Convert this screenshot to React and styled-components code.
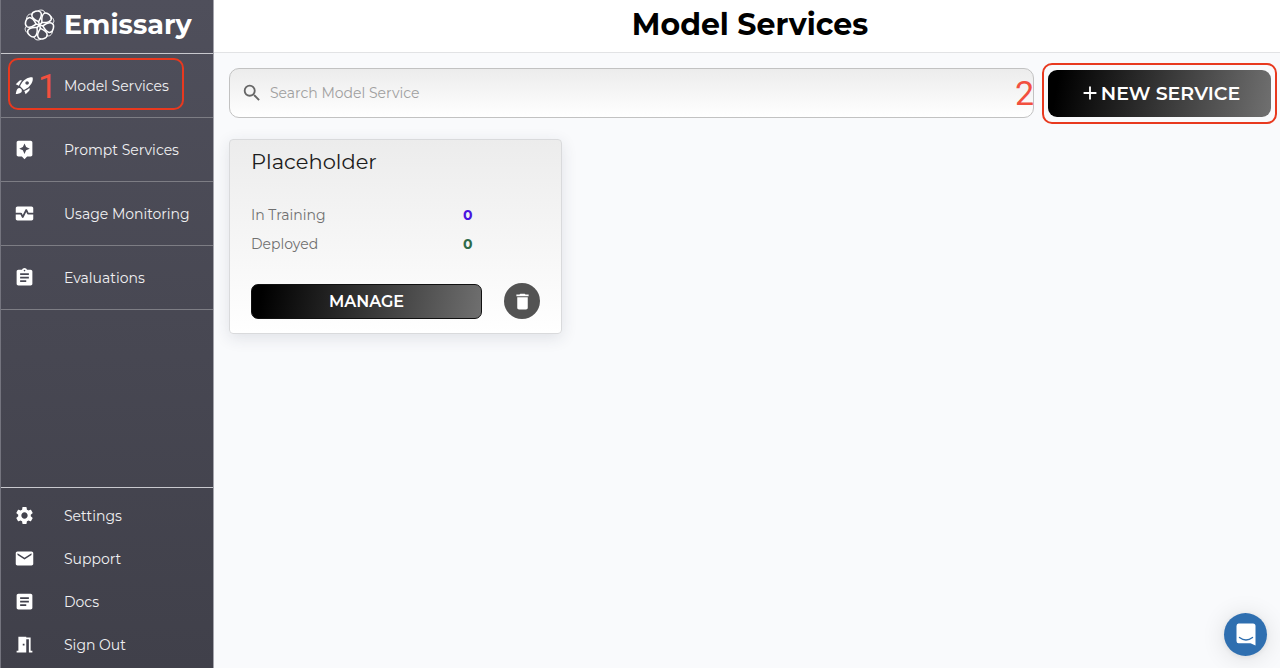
import React from 'react';
import styled, { createGlobalStyle } from 'styled-components';
import {
  MdAssistant, MdMonitorHeart, MdAssignment, MdSettings, MdEmail,
  MdArticle, MdMeetingRoom, MdSearch, MdDelete, MdAdd, MdRocketLaunch,
} from 'react-icons/md';

const GlobalStyle = createGlobalStyle`
  *, *::before, *::after { box-sizing: border-box; }
  body {
    margin: 0;
    background: #f9fafc;
    color: #111;
    font-family: Montserrat, Inter, "Liberation Sans", sans-serif;
  }
  button, input { font-family: inherit; }
`;

const Shell = styled.div`
  display: flex;
  min-height: 100vh;
`;

const Sidebar = styled.aside`
  position: sticky;
  top: 0;
  flex: 0 0 214px;
  height: 100vh;
  display: flex;
  flex-direction: column;
  color: #fff;
  background: linear-gradient(180deg, #4f4f5b 0%, #40404a 100%);
  border-left: 1px solid #74747e;
  border-right: 1px solid #a4a4ac;
`;

const Brand = styled.div`
  display: flex;
  align-items: center;
  gap: 8px;
  flex: 0 0 54px;
  padding: 0 0 4px 22px;
  border-bottom: 1px solid #c9c9ce;
  font-size: 27px;
  font-weight: 700;
`;

const List = styled.ul`
  list-style: none;
  margin: 0;
  padding: 0;
`;

const FooterList = styled(List)`
  margin-top: auto;
  padding: 6px 0 2px;
  border-top: 1px solid #c9c9ce;
`;

const NavItem = styled.li`
  position: relative;
  border-bottom: ${({ $compact }) => ($compact ? 'none' : '1px solid #7d7d84')};
`;

const NavLink = styled.a`
  display: flex;
  align-items: center;
  gap: 29px;
  height: ${({ $compact }) => ($compact ? '43px' : '63px')};
  padding-left: 13px;
  color: #f0f0f2;
  font-size: 14px;
  font-weight: 400;
  text-decoration: none;
  white-space: nowrap;

  svg { flex: none; color: #fff; }
`;

const Outline = styled.span`
  position: absolute;
  inset: ${({ $inset }) => $inset};
  border: 2px solid #e8391f;
  border-radius: 10px;
  pointer-events: none;
`;

const StepNumber = styled.span`
  position: absolute;
  top: 50%;
  ${({ $side }) => $side};
  transform: translateY(-50%);
  color: #f2503f;
  font-family: Roboto, "Liberation Sans", sans-serif;
  font-size: 34px;
  line-height: 36px;
  pointer-events: none;
`;

const Main = styled.main`
  flex: 1;
  min-width: 0;
`;

const Header = styled.header`
  display: flex;
  align-items: center;
  justify-content: center;
  height: 53px;
  padding: 0 0 2px 6px;
  background: #fff;
  border-bottom: 1px solid #e2e3e5;
`;

const Title = styled.h1`
  margin: 0;
  color: #000;
  font-size: 30px;
  line-height: 40px;
  font-weight: 700;
`;

const Content = styled.div`
  padding: 15px 9px 24px 15px;
`;

const Toolbar = styled.div`
  display: flex;
  align-items: center;
  gap: 14px;
  margin-bottom: 21px;
`;

const SearchWrap = styled.div`
  position: relative;
  flex: 1;
`;

const SearchBox = styled.label`
  display: flex;
  align-items: center;
  gap: 7px;
  height: 50px;
  padding: 0 12px 0 11px;
  border: 1px solid #c2c2c2;
  border-radius: 10px;
  background: linear-gradient(180deg, #ececec, #fff);
  color: #666;
`;

const SearchInput = styled.input`
  flex: 1;
  min-width: 0;
  padding: 0;
  border: 0;
  outline: 0;
  background: none;
  color: #333;
  font-size: 14px;
  font-weight: 400;

  &::placeholder { color: #a0a0a0; opacity: 1; }
`;

const ButtonWrap = styled.div`
  position: relative;
  flex: 0 0 223px;
`;

const GradientButton = styled.button`
  display: flex;
  align-items: center;
  justify-content: center;
  width: 100%;
  height: ${({ $large }) => ($large ? '47px' : '35px')};
  padding: 0;
  border: 1px solid ${({ $large }) => ($large ? 'transparent' : '#111')};
  border-radius: ${({ $large }) => ($large ? '9px' : '7px')};
  background: linear-gradient(100deg, #000 5%, #707070 100%) border-box;
  color: #fff;
  font-size: ${({ $large }) => ($large ? '19px' : '16px')};
  font-weight: 600;
  cursor: pointer;
`;

const Cards = styled.div`
  display: grid;
  grid-template-columns: repeat(auto-fill, 333px);
  gap: 20px;
`;

const Card = styled.article`
  padding: 7px 21px 14px;
  border: 1px solid #d9dadc;
  border-radius: 4px;
  background: linear-gradient(180deg, #ececec, #fff);
  box-shadow: 0 4px 16px rgba(40, 50, 70, 0.12);
`;

const CardTitle = styled.h2`
  margin: 0 0 24px;
  color: #1c1c1c;
  font-size: 21px;
  line-height: 30px;
  font-weight: 400;
`;

const Stats = styled.dl`
  margin: 0 0 24px;
`;

const Stat = styled.div`
  display: grid;
  grid-template-columns: 212px 1fr;
  height: 29px;
  line-height: 28px;
  font-size: 14px;
`;

const StatLabel = styled.dt`
  color: #707070;
  font-weight: 400;
`;

const StatValue = styled.dd`
  margin: 0;
  color: ${({ $color }) => $color};
  font-weight: 700;
`;

const Actions = styled.div`
  display: flex;
  align-items: center;
  gap: 22px;
`;

const RoundButton = styled.button`
  display: grid;
  place-items: center;
  flex: 0 0 36px;
  height: 36px;
  padding: 0;
  border: 0;
  border-radius: 50%;
  background: #535353;
  color: #fff;
  cursor: pointer;
`;

const ChatButton = styled.button`
  position: fixed;
  right: 13px;
  bottom: 12px;
  display: grid;
  place-items: center;
  width: 43px;
  height: 43px;
  padding: 0;
  border: 0;
  border-radius: 50%;
  background: #2f6fb0;
  box-shadow: 0 1px 6px rgba(0, 0, 0, 0.08), 0 2px 24px rgba(0, 0, 0, 0.12);
  cursor: pointer;
`;

const petals = [0, 60, 120, 180, 240, 300];

function Logo() {
  return (
    <svg width="33" height="32" viewBox="-16 -16 32 32" fill="none" stroke="#fff" aria-hidden="true">
      {petals.map((angle) => (
        <g key={angle} transform={`rotate(${angle - 16})`}>
          <path d="M0 -3.500C-2.400 -5.500 -5.600 -9 -4.600 -12C-3.400 -15 3.400 -15 4.600 -12C5.600 -9 2.400 -5.500 0 -3.500Z" strokeWidth="1.500" />
          <path d="M2.500 -14C6.500 -14.800 9.400 -12.300 8.300 -9.200" strokeWidth="0.900" />
          <path d="M0 -1V-4" strokeWidth="1.600" />
        </g>
      ))}
      <circle r="1.600" fill="#fff" stroke="none" />
    </svg>
  );
}

function ChatIcon() {
  return (
    <svg width="20" height="23" viewBox="0 0 20 23" aria-hidden="true">
      <path d="M2.500 0.500H17Q19.500 0.500 19.500 3V22.500L14.500 20.300H2.500Q0.500 20.300 0.500 18V3Q0.500 0.500 2.500 0.500Z" fill="#fff" />
      <path d="M3.500 14.500Q10 19.500 16.500 14.500" fill="none" stroke="#2f6fb0" strokeWidth="1.400" strokeLinecap="round" />
    </svg>
  );
}

const services = [
  { label: 'Model Services', Icon: MdRocketLaunch, step: '1' },
  { label: 'Prompt Services', Icon: MdAssistant },
  { label: 'Usage Monitoring', Icon: MdMonitorHeart },
  { label: 'Evaluations', Icon: MdAssignment },
];

const account = [
  { label: 'Settings', Icon: MdSettings },
  { label: 'Support', Icon: MdEmail },
  { label: 'Docs', Icon: MdArticle },
  { label: 'Sign Out', Icon: MdMeetingRoom },
];

function NavEntry({ label, Icon, step, compact }) {
  return (
    <NavItem $compact={compact}>
      <NavLink href="#" $compact={compact}>
        <Icon size={21} />
        {label}
      </NavLink>
      {step && (
        <>
          <Outline $inset="4px 29px 7px 7px" />
          <StepNumber $side="left: 37px">{step}</StepNumber>
        </>
      )}
    </NavItem>
  );
}

export default function App() {
  return (
    <>
      <GlobalStyle />
      <Shell>
        <Sidebar>
          <Brand><Logo />Emissary</Brand>
          <nav aria-label="Services">
            <List>{services.map((item) => <NavEntry key={item.label} {...item} />)}</List>
          </nav>
          <FooterList>
            {account.map((item) => <NavEntry key={item.label} {...item} compact />)}
          </FooterList>
        </Sidebar>
        <Main>
          <Header><Title>Model Services</Title></Header>
          <Content>
            <Toolbar>
              <SearchWrap>
                <SearchBox>
                  <MdSearch size={22} />
                  <SearchInput type="text" placeholder="Search Model Service" aria-label="Search Model Service" />
                </SearchBox>
                <StepNumber $side="right: 0">2</StepNumber>
              </SearchWrap>
              <ButtonWrap>
                <GradientButton type="button" $large><MdAdd size={22} />NEW SERVICE</GradientButton>
                <Outline $inset="-7px -6px" />
              </ButtonWrap>
            </Toolbar>
            <Cards>
              <Card>
                <CardTitle>Placeholder</CardTitle>
                <Stats>
                  <Stat><StatLabel>In Training</StatLabel><StatValue $color="#4b14e0">0</StatValue></Stat>
                  <Stat><StatLabel>Deployed</StatLabel><StatValue $color="#2f6b4a">0</StatValue></Stat>
                </Stats>
                <Actions>
                  <GradientButton type="button">MANAGE</GradientButton>
                  <RoundButton type="button" aria-label="Delete"><MdDelete size={21} /></RoundButton>
                </Actions>
              </Card>
            </Cards>
          </Content>
        </Main>
      </Shell>
      <ChatButton type="button" aria-label="Open chat"><ChatIcon /></ChatButton>
    </>
  );
}
